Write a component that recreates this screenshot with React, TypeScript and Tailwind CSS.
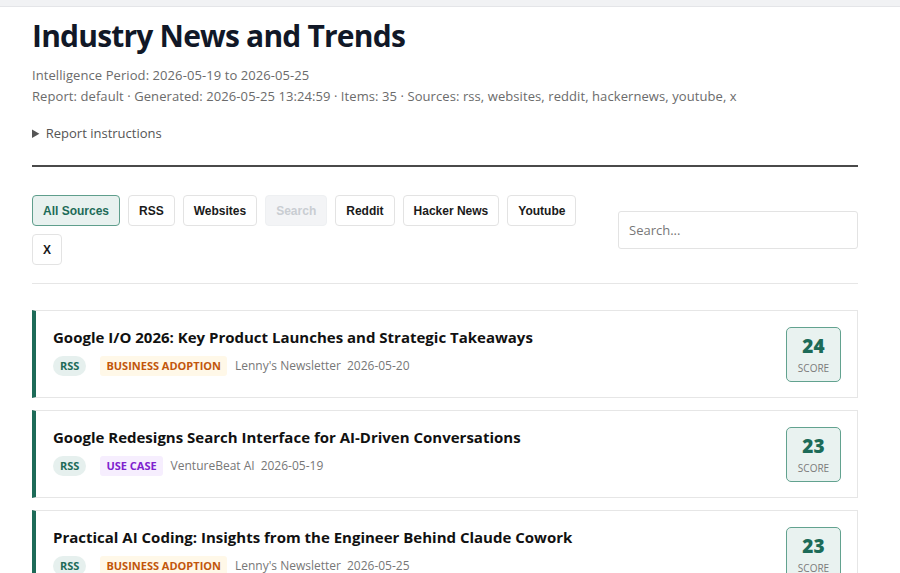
import React from 'react';

type Item = {
  title: string;
  source: string;
  category: string;
  tone: 'orange' | 'purple';
  publisher: string;
  date: string;
  score: number;
};

const items: Item[] = [
  {
    title: 'Google I/O 2026: Key Product Launches and Strategic Takeaways',
    source: 'RSS',
    category: 'Business Adoption',
    tone: 'orange',
    publisher: "Lenny's Newsletter",
    date: '2026-05-20',
    score: 24,
  },
  {
    title: 'Google Redesigns Search Interface for AI-Driven Conversations',
    source: 'RSS',
    category: 'Use Case',
    tone: 'purple',
    publisher: 'VentureBeat AI',
    date: '2026-05-19',
    score: 23,
  },
  {
    title: 'Practical AI Coding: Insights from the Engineer Behind Claude Cowork',
    source: 'RSS',
    category: 'Business Adoption',
    tone: 'orange',
    publisher: "Lenny's Newsletter",
    date: '2026-05-25',
    score: 23,
  },
];

const filters = ['All Sources', 'RSS', 'Websites', 'Search', 'Reddit', 'Hacker News', 'Youtube', 'X'];

function FilterButton({ label }: { label: string }) {
  if (label === 'All Sources') {
    return (
      <button className="h-[31px] px-[10px] rounded-[4px] border border-[#5f9e8c] bg-[#e8f1ef] text-[#1d6b58] text-[12px] font-bold">
        {label}
      </button>
    );
  }
  if (label === 'Search') {
    return (
      <button className="h-[31px] px-[10px] rounded-[4px] border border-[#eef0f2] bg-[#f3f4f6] text-[#c9cdd2] text-[12px] font-bold">
        {label}
      </button>
    );
  }
  return (
    <button className="h-[31px] px-[10px] rounded-[4px] border border-[#e3e3e3] bg-white text-[#1a1a1a] text-[12px] font-bold">
      {label}
    </button>
  );
}

function NewsCard({ item }: { item: Item }) {
  return (
    <div className="flex items-center justify-between border border-[#e6e6e6] border-l-4 border-l-[#1d6b58] bg-white pl-[17px] pr-4 py-[15px]">
      <div className="flex flex-col gap-[8px] mb-[6px]">
        <h3 className="text-[15px] leading-[22px] font-bold text-[#111]">{item.title}</h3>
        <div className="flex items-center gap-2 text-[12px]">
          <span className="rounded-full bg-[#e6f0ee] text-[#1d6b58] font-bold text-[11px] px-[7px] py-[3px] leading-[14px]">
            {item.source}
          </span>
          <span
            className={
              item.tone === 'orange'
                ? 'ml-[6px] rounded-[3px] bg-[#fff8e8] text-[#c2560c] font-bold text-[11px] uppercase px-[6px] py-[3px] leading-[14px]'
                : 'ml-[6px] rounded-[3px] bg-[#f6eefe] text-[#7e22ce] font-bold text-[11px] uppercase px-[6px] py-[3px] leading-[14px]'
            }
          >
            {item.category}
          </span>
          <span className="text-[#777]">{item.publisher}</span>
          <span className="text-[#777] -ml-[2px]">{item.date}</span>
        </div>
      </div>
      <div className="w-[55px] h-[55px] shrink-0 rounded-[5px] border border-[#62a28f] bg-[#e9f2f0] flex flex-col items-center justify-center">
        <span className="text-[19px] leading-[24px] font-extrabold text-[#1d6b58]">{item.score}</span>
        <span className="mt-[3px] text-[10px] leading-[14px] text-[#7b7b7b] uppercase">Score</span>
      </div>
    </div>
  );
}

export default function App() {
  return (
    <div className="min-h-screen bg-white font-['Open_Sans',sans-serif] text-[#1a1a1a]">
      <div className="h-[7px] bg-[#f1f2f4] border-b border-[#e4e5e8]" />
      <main className="ml-8 w-[826px]">
        <h1 className="mt-[7px] text-[30px] leading-[44px] font-bold text-[#111827] tracking-[-0.8px]">
          Industry News and Trends
        </h1>
        <div className="mt-[7px] text-[13px] leading-[21px] text-[#6b6b6b] tracking-[0.08px]">
          <p>Intelligence Period: 2026-05-19 to 2026-05-25</p>
          <p>Report: default · Generated: 2026-05-25 13:24:59 · Items: 35 · Sources: rss, websites, reddit, hackernews, youtube, x</p>
        </div>
        <details className="mt-[16px] text-[13px] leading-[21px] text-[#555]">
          <summary className="cursor-pointer">Report instructions</summary>
        </details>
        <hr className="mt-[21px] border-0 h-[2px] bg-[#4a4a4a]" />

        <div className="mt-[28px] flex items-center justify-between gap-10 font-['Liberation_Sans',sans-serif]">
          <div className="flex-1 flex flex-wrap gap-2">
            {filters.map((f) => (
              <FilterButton key={f} label={f} />
            ))}
          </div>
          <input
            placeholder="Search..."
            className="w-[240px] h-[38px] rounded-[3px] border border-[#e3e3e3] px-[10px] text-[13px] font-['Open_Sans',sans-serif] placeholder:text-[#777] outline-none"
          />
        </div>
        <div className="mt-[18px] h-px bg-[#e6e6e6]" />

        <div className="mt-[26px] flex flex-col gap-[12px]">
          {items.map((item) => (
            <NewsCard key={item.title} item={item} />
          ))}
        </div>
      </main>
    </div>
  );
}
